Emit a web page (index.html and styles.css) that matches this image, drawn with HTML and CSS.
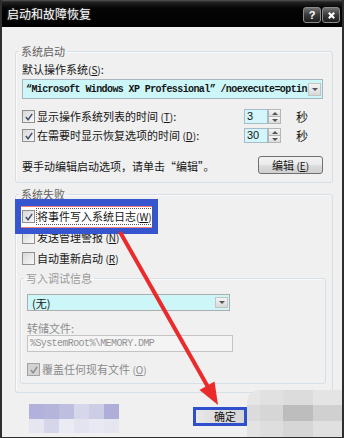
FILE: index.html
```html
<!DOCTYPE html>
<html lang="zh-CN">
<head>
    <meta charset="UTF-8">
    <meta name="viewport" content="width=device-width, initial-scale=1.0">
    <title>启动和故障恢复</title>
    <link rel="stylesheet" href="styles.css">
</head>
<body>
    <div class="window">
        <div class="titlebar">
            <span class="title">启动和故障恢复</span>
            <div class="title-buttons">
                <span class="tb-btn">?</span>
                <span class="tb-btn">
                    <svg viewBox="0 0 10 10"><path d="M2 2L8 8M8 2L2 8" /></svg>
                </span>
            </div>
        </div>

        <div class="dialog">
            <!-- 系统启动 -->
            <fieldset class="group">
                <legend>系统启动</legend>
                <div class="label-row">默认操作系统<span class="key">(<u>S</u>)</span>:</div>
                <div class="combo wide">
                    <span class="combo-text mono">“Microsoft Windows XP Professional” /noexecute=optin</span>
                    <span class="drop"></span>
                </div>

                <div class="opt-row first">
                    <span class="check on"><svg viewBox="0 0 11 11"><path d="M2 5.5L4.5 8.5L9 2" /></svg></span>
                    <span class="text">显示操作系统列表的时间 <span class="key">(<u>T</u>)</span>:</span>
                    <div class="spin">
                        <span class="spin-field">3</span>
                        <span class="spin-btns"><span class="up"></span><span class="down"></span></span>
                    </div>
                    <span class="sec">秒</span>
                </div>

                <div class="opt-row">
                    <span class="check on"><svg viewBox="0 0 11 11"><path d="M2 5.5L4.5 8.5L9 2" /></svg></span>
                    <span class="text">在需要时显示恢复选项的时间 <span class="key">(<u>D</u>)</span>:</span>
                    <div class="spin">
                        <span class="spin-field">30</span>
                        <span class="spin-btns"><span class="up"></span><span class="down"></span></span>
                    </div>
                    <span class="sec">秒</span>
                </div>

                <div class="edit-row">
                    <span class="text">要手动编辑启动选项，请单击“编辑”。</span>
                    <span class="btn">编辑 <span class="key">(<u>E</u>)</span></span>
                </div>
            </fieldset>

            <!-- 系统失败 -->
            <fieldset class="group fail">
                <legend>系统失败</legend>
                <div class="opt-row marked">
                    <span class="check on"><svg viewBox="0 0 11 11"><path d="M2 5.5L4.5 8.5L9 2" /></svg></span>
                    <span class="text focus">将事件写入系统日志<span class="key">(<u>W</u>)</span></span>
                </div>
                <div class="opt-row">
                    <span class="check"></span>
                    <span class="text">发送管理警报 <span class="key">(<u>N</u>)</span></span>
                </div>
                <div class="opt-row">
                    <span class="check"></span>
                    <span class="text">自动重新启动 <span class="key">(<u>R</u>)</span></span>
                </div>

                <fieldset class="group sub">
                    <legend>写入调试信息</legend>
                    <div class="combo small">
                        <span class="combo-text">(无)</span>
                        <span class="drop"></span>
                    </div>
                    <div class="label-row disabled">转储文件:</div>
                    <div class="textbox mono">%SystemRoot%\MEMORY.DMP</div>
                    <div class="opt-row disabled">
                        <span class="check on off"><svg viewBox="0 0 11 11"><path d="M2 5.5L4.5 8.5L9 2" /></svg></span>
                        <span class="text">覆盖任何现有文件 <span class="key">(<u>O</u>)</span></span>
                    </div>
                </fieldset>
            </fieldset>

            <div class="footer">
                <div class="mosaic">
                    <span></span><span></span><span></span><span></span><span></span><span></span>
                    <span></span><span></span><span></span><span></span><span></span><span></span>
                </div>
                <span class="ok">确定</span>
                <div class="smudge">
                    <span></span><span></span><span></span><span></span>
                    <span></span><span></span><span></span><span></span>
                    <span></span><span></span><span></span><span></span>
                </div>
            </div>
        </div>

        <svg class="arrow" viewBox="0 0 344 438">
            <line x1="120" y1="232" x2="208" y2="387" />
            <polygon points="218,405 199.5,390 214.5,381.5" />
        </svg>
    </div>
</body>
</html>
```

FILE: styles.css
```css
/* Reset */
*, *::before, *::after {
    margin: 0;
    padding: 0;
    box-sizing: border-box;
}

body {
    width: 344px;
    height: 438px;
    overflow: hidden;
    font-family: "Noto Sans CJK SC", "Liberation Sans", sans-serif;
    font-size: 11px;
    color: #151515;
    background: #2e2e2e;
}

.window {
    position: relative;
    width: 344px;
    height: 438px;
    border: 2px solid #2e2e2e;
    border-top: 0;
    display: flex;
    flex-direction: column;
    background: #f0f0f0;
}

/* Title bar */
.titlebar {
    height: 27px;
    flex: none;
    display: flex;
    align-items: flex-start;
    padding: 0 2px 0 5px;
    background: linear-gradient(to bottom, #555 0, #222 2px, #050505 8px, #000 100%);
}

.title {
    color: #fff;
    font-size: 12px;
    line-height: 27px;
    text-shadow: 0 0 3px rgba(255, 255, 255, 0.35);
}

.title-buttons {
    margin-left: auto;
    margin-top: 7px;
    display: flex;
    gap: 1px;
}

.tb-btn {
    width: 18px;
    height: 16px;
    border: 1px solid #8c8c8c;
    border-radius: 3px;
    background: linear-gradient(to bottom, #727272, #3a3a3a 50%, #1c1c1c);
    color: #fff;
    font: bold 11px/14px "Liberation Sans", sans-serif;
    text-align: center;
    display: flex;
    align-items: center;
    justify-content: center;
}

.tb-btn svg {
    width: 9px;
    height: 9px;
}

.tb-btn path {
    stroke: #fff;
    stroke-width: 2.4;
}

/* Dialog body */
.dialog {
    flex: 1;
    padding: 17px 9px 0 13px;
    background: #f0f0f0;
}

.group {
    margin: 0;
    padding: 3px 9px 8px 6px;
    border: 1px solid #d5dfe5;
    border-radius: 3px;
    box-shadow: inset 1px 1px 0 #fafafa;
    min-width: 0;
}

.group legend {
    margin-left: -3px;
    padding: 0 2px;
    font-size: 11px;
    line-height: 14px;
    color: #626262;
}

.group.fail {
    margin-top: 4px;
    padding-top: 8px;
}

.group.sub {
    margin: 5px -3px 0 -2px;
    padding: 9px 6px 6px 6px;
}

.group.sub legend {
    color: #9a9a9a;
}

.key {
    font-size: 10px;
}

.label-row {
    line-height: 16px;
}

.label-row.disabled {
    margin-top: 10px;
    line-height: 14px;
    color: #8e8e8e;
}

.mono {
    font-family: "Liberation Mono", monospace;
    font-size: 10px;
    font-weight: bold;
    letter-spacing: -0.6px;
}

/* Combo boxes */
.combo {
    display: flex;
    align-items: center;
    border: 1px solid #a9b4bd;
    background: #ccf6f7;
}

.combo.wide {
    height: 20px;
    margin-top: 1px;
    padding-left: 3px;
}

.combo.small {
    width: 203px;
    height: 17px;
    padding-left: 4px;
    border-color: #adadad;
}

.combo-text {
    flex: 1;
    white-space: nowrap;
    overflow: hidden;
}

.drop {
    width: 13px;
    height: 13px;
    margin-right: 1px;
    border: 1px solid #c3c3c3;
    background: linear-gradient(to bottom, #f4f4f4, #d8d8d8);
    display: flex;
    align-items: center;
    justify-content: center;
}

.combo.small .drop {
    height: 11px;
}

.drop::after {
    content: "";
    border-left: 3px solid transparent;
    border-right: 3px solid transparent;
    border-top: 3px solid #555;
}

/* Check rows */
.opt-row {
    display: flex;
    align-items: center;
    gap: 2px;
    height: 15px;
    margin-top: 6px;
}

.opt-row.first {
    margin-top: 10px;
}

.group > .opt-row:not(.first) + .opt-row,
.group > .opt-row.first + .opt-row {
    margin-top: 4px;
}

.group.fail > .opt-row + .opt-row {
    margin-top: 6px;
}

.opt-row .text {
    flex: 1;
    white-space: nowrap;
    line-height: 15px;
}

.check {
    width: 13px;
    height: 13px;
    flex: none;
    border: 1px solid #8f8f8f;
    background: linear-gradient(135deg, #d8d8d8, #f8f8f8);
    display: flex;
    align-items: center;
    justify-content: center;
}

.check svg {
    width: 10px;
    height: 10px;
}

.check path {
    fill: none;
    stroke: #3f4c6c;
    stroke-width: 1.6;
}

.check.off {
    background: #d2d2d2;
    border-color: #a3a3a3;
}

.check.off path {
    stroke: #8d8d8d;
}

.opt-row.disabled {
    margin-top: 10px;
    color: #8a8a8a;
}

.opt-row.marked {
    position: relative;
    z-index: 0;
    margin-top: 0;
}

.opt-row.marked::before {
    content: "";
    position: absolute;
    left: -7px;
    top: -10px;
    width: 143px;
    height: 35px;
    border: 6px solid #3656cf;
    border-top-width: 7px;
    background: #fff;
    box-shadow: inset 0 1px 0 #f07b7b, inset 0 -1px 0 #f07b7b;
    z-index: -1;
}

.opt-row .text.focus {
    flex: none;
    outline: 1px dotted #555;
}

/* Spinners */
.spin {
    display: flex;
    height: 15px;
}

.spin-field {
    width: 24px;
    border: 1px solid #a6bccd;
    background: #d3f6fb;
    padding-left: 2px;
    font: 11px/13px "Liberation Sans", sans-serif;
}

.spin-btns {
    width: 13px;
    display: flex;
    flex-direction: column;
}

.spin-btns span {
    flex: 1;
    border: 1px solid #b5b5b5;
    background: linear-gradient(to bottom, #f6f6f6, #dcdcdc);
    display: flex;
    align-items: center;
    justify-content: center;
}

.spin-btns .down {
    border-top: 0;
}

.spin-btns .up::after {
    content: "";
    border-left: 3px solid transparent;
    border-right: 3px solid transparent;
    border-bottom: 3px solid #555;
}

.spin-btns .down::after {
    content: "";
    border-left: 3px solid transparent;
    border-right: 3px solid transparent;
    border-top: 3px solid #555;
}

.sec {
    width: 40px;
    padding-left: 13px;
    font-size: 12px;
}

/* Edit row */
.edit-row {
    display: flex;
    align-items: center;
    margin-top: 13px;
    height: 18px;
}

.edit-row .text {
    flex: 1;
    margin-top: 1px;
}

.btn {
    width: 65px;
    height: 18px;
    border: 1px solid #707070;
    border-radius: 3px;
    background: linear-gradient(to bottom, #f2f2f2, #ebebeb 48%, #dddddd 52%, #cfcfcf);
    text-align: center;
    line-height: 16px;
}

/* Dump file */
.textbox {
    width: 206px;
    height: 17px;
    border: 1px solid #c4c4c4;
    background: #f4f4f4;
    color: #939393;
    padding-left: 2px;
    line-height: 15px;
    font-weight: normal;
}

/* Footer */
.footer {
    display: flex;
    align-items: flex-start;
    height: 44px;
}

.mosaic {
    margin: 11px 0 0 14px;
    display: grid;
    grid-template-columns: repeat(6, 15px);
    grid-template-rows: 15px 14px;
}

.mosaic span:nth-child(1) { background: #b1b1dc; }
.mosaic span:nth-child(2) { background: #b5b5dc; }
.mosaic span:nth-child(3) { background: #bebee0; }
.mosaic span:nth-child(4) { background: #d7d7eb; }
.mosaic span:nth-child(5) { background: #cdcde6; }
.mosaic span:nth-child(6) { background: #aeaed9; }
.mosaic span:nth-child(7) { background: #e6e6f1; }
.mosaic span:nth-child(8) { background: #d6d6ea; }
.mosaic span:nth-child(9) { background: #ebebf3; }
.mosaic span:nth-child(10) { background: #e4e4f0; }
.mosaic span:nth-child(11) { background: #e9e9f3; }
.mosaic span:nth-child(12) { background: #e6e6f0; }

.ok {
    margin: 14px 0 0 74px;
    width: 54px;
    height: 19px;
    border: 3px solid #2f4fcc;
    background: linear-gradient(to right, #e9e9e9, #dedede 40%, #d6d6d6);
    text-align: right;
    padding-right: 8px;
    font-size: 11px;
    line-height: 13px;
    color: #111;
    position: relative;
    z-index: 1;
}

.smudge {
    flex: 1;
    height: 47px;
    margin: -3px -9px 0 0;
    display: grid;
    grid-template-columns: 13px 23px 30px 1fr;
    grid-template-rows: 15px 16px 16px;
    border-top-left-radius: 12px;
    overflow: hidden;
}

.smudge span:nth-child(1) { background: #e6e6e6; }
.smudge span:nth-child(2) { background: #e1e1e1; }
.smudge span:nth-child(3) { background: #dcdcdc; }
.smudge span:nth-child(4) { background: #e4e4e4; }
.smudge span:nth-child(5) { background: #dbdbdb; }
.smudge span:nth-child(6) { background: #d6d6d6; }
.smudge span:nth-child(7) { background: #bdbdbd; }
.smudge span:nth-child(8) { background: #d0d0d0; }
.smudge span:nth-child(9) { background: #e3e3e3; }
.smudge span:nth-child(10) { background: #dedede; }
.smudge span:nth-child(11) { background: #d6d6d6; }
.smudge span:nth-child(12) { background: #e0e0e0; }

/* Annotation arrow */
.arrow {
    position: absolute;
    left: -2px;
    top: 0;
    width: 344px;
    height: 438px;
    pointer-events: none;
}

.arrow line {
    stroke: #ea2b2b;
    stroke-width: 4;
}

.arrow polygon {
    fill: #ea2b2b;
}
```
